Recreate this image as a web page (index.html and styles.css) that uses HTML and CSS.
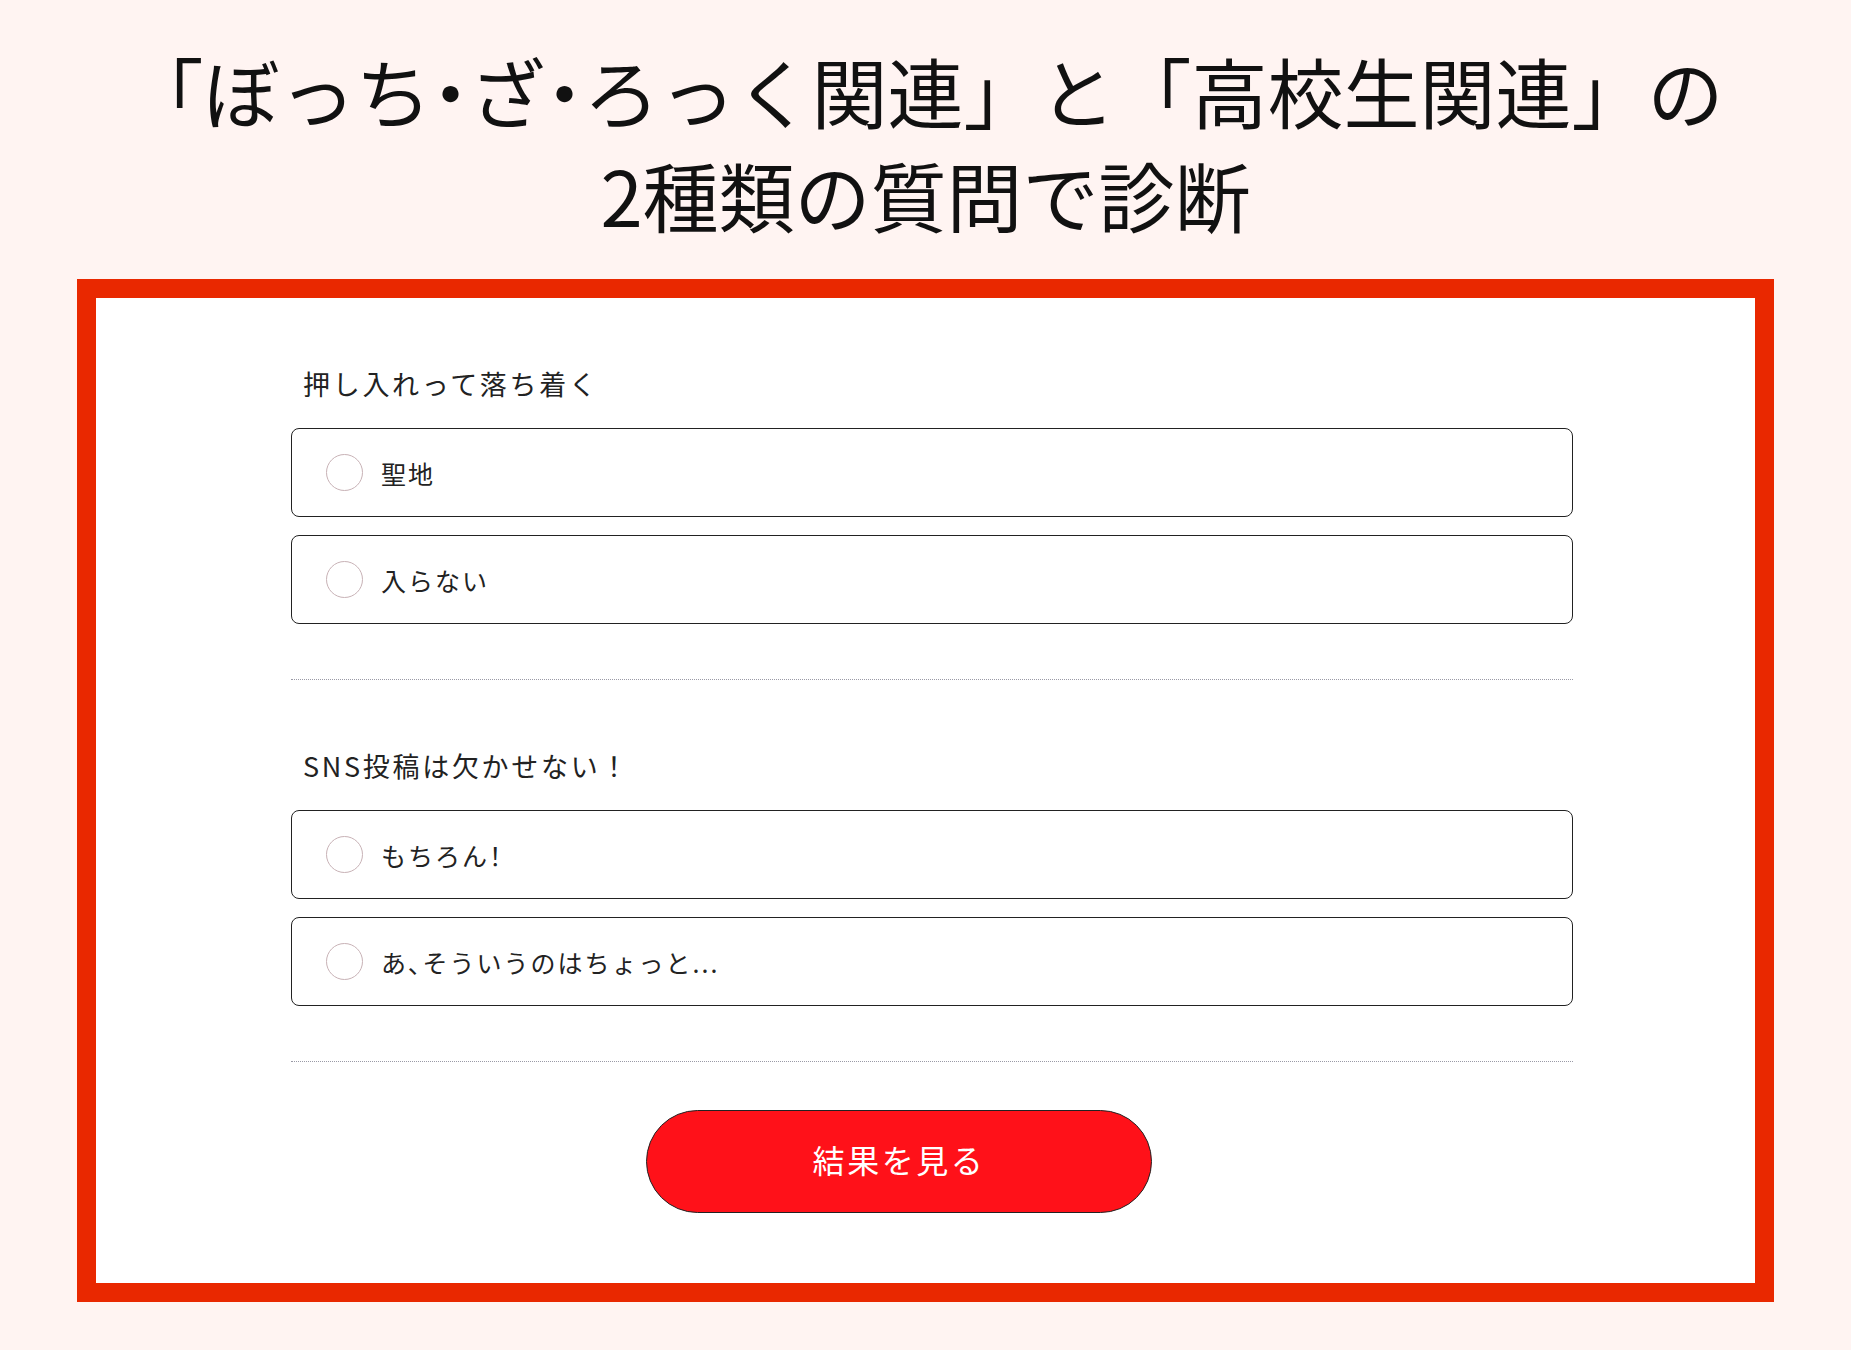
FILE: index.html
```html
<!DOCTYPE html>
<html lang="ja">
<head>
  <meta charset="UTF-8">
  <meta name="viewport" content="width=device-width, initial-scale=1.0">
  <title>ぼっち・ざ・ろっく 診断</title>
  <link rel="stylesheet" href="styles.css">
</head>
<body>

  <h1 class="title">「ぼっち<span class="narrow">・</span>ざ<span class="narrow">・</span>ろっく関連」と「高校生関連」の<br>2種類の質問で診断</h1>

  <form class="quiz" onsubmit="return false;">
    <div class="quiz-inner">

      <div class="question">
        <p class="question-text">押し入れって落ち着く</p>
        <label class="option">
          <input type="radio" name="q1" value="1">
          <span>聖地</span>
        </label>
        <label class="option">
          <input type="radio" name="q1" value="2">
          <span>入らない</span>
        </label>
      </div>

      <div class="question">
        <p class="question-text">SNS投稿は欠かせない！</p>
        <label class="option">
          <input type="radio" name="q2" value="1">
          <span>もちろん<span class="narrow">！</span></span>
        </label>
        <label class="option">
          <input type="radio" name="q2" value="2">
          <span>あ<span class="narrow">、</span>そういうのはちょっと...</span>
        </label>
      </div>

      <button type="submit" class="result-btn">結果を見る</button>

    </div>
  </form>

</body>
</html>
```

FILE: styles.css
```css
/* ベース */
body {
  margin: 0;
  background-color: #fff4f2;
  color: #111;
  font-family: "Noto Sans CJK JP", "Noto Sans", sans-serif;
}

/* 約物を詰める */
.narrow {
  font-feature-settings: "palt";
}

/* タイトル */
.title {
  margin: 38px 0 33px;
  font-size: 76px;
  font-weight: 400;
  line-height: 104px;
  text-align: center;
}

/* 赤枠 */
.quiz {
  margin: 0 77px 49px;
  border: 19px solid #e92800;
  background-color: #fff;
}
.quiz-inner {
  width: 1282px;
  margin-left: 195px;
  padding: 66px 0 70px;
}

/* 質問 */
.question {
  padding-bottom: 55px;
  margin-bottom: 48px;
  border-bottom: 1px dotted #9a9aa6;
}
.question + .question {
  margin-top: -48px;
  padding-top: 66px;
}
.question-text {
  margin: 0 0 24px 12px;
  font-size: 27px;
  line-height: 40px;
  letter-spacing: 0.1em;
  color: #222;
}

/* 選択肢 */
.option {
  display: flex;
  align-items: center;
  box-sizing: border-box;
  height: 89px;
  padding-left: 34px;
  border: 1px solid #222;
  border-radius: 8px;
  font-size: 25px;
  letter-spacing: 0.08em;
  color: #222;
  cursor: pointer;
}
.option + .option {
  margin-top: 18px;
}
.option input[type="radio"] {
  appearance: none;
  -webkit-appearance: none;
  width: 37px;
  height: 37px;
  margin: 0 18px 0 0;
  border: 1px solid #c8b2b6;
  border-radius: 50%;
  background: #fff;
  flex-shrink: 0;
}
.option input[type="radio"]:checked {
  background: radial-gradient(circle, #e92800 0 8px, #fff 9px);
}

/* ボタン */
.result-btn {
  display: block;
  width: 506px;
  height: 103px;
  margin-left: 355px;
  padding: 0 0 6px;
  border: 1px solid #222;
  border-radius: 52px;
  background-color: #ff1119;
  color: #fff;
  font-family: inherit;
  font-size: 32px;
  letter-spacing: 0.08em;
  cursor: pointer;
}
.result-btn:hover {
  background-color: #e80d14; /* 少し暗く */
}
```
